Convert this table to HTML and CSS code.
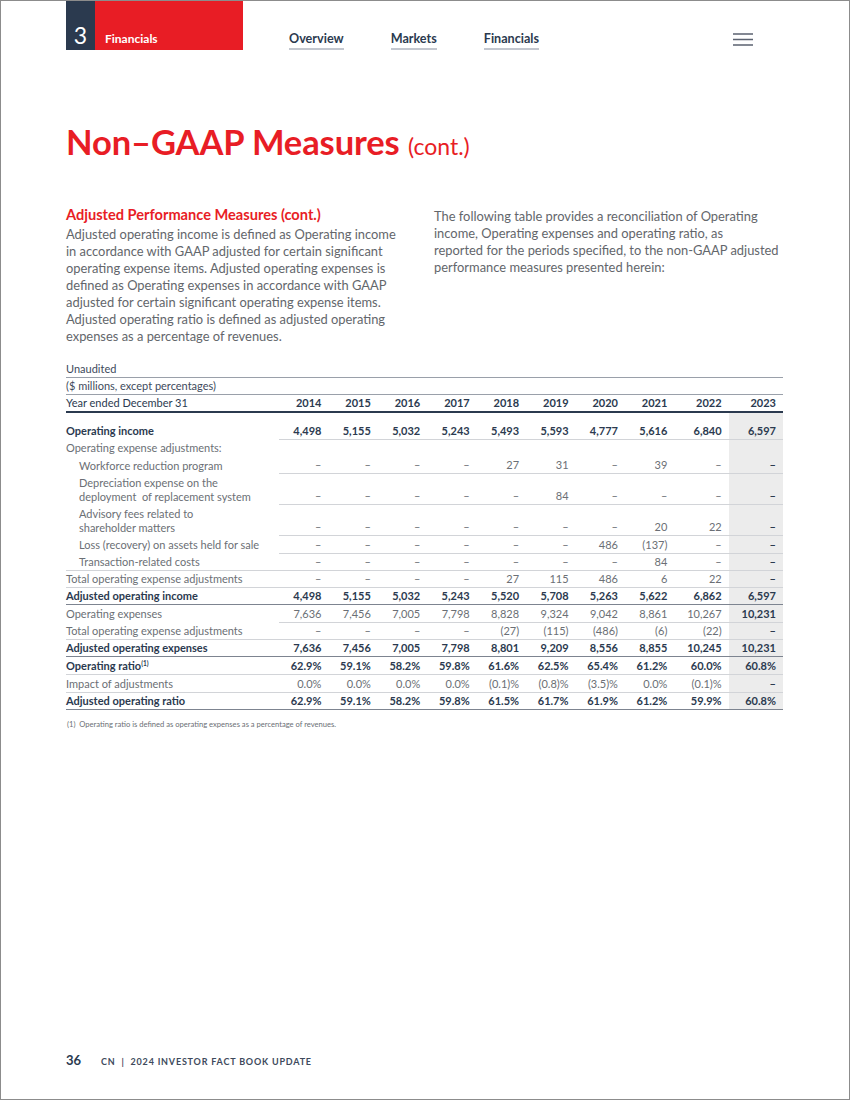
FILE: index.html
```html
<!DOCTYPE html>
<html>
<head>
<meta charset="utf-8">
<link rel="stylesheet" href="styles.css">
</head>
<body>
<div class="page">
  <header class="topbar">
    <div class="chapter">
      <div class="chapter-num">3</div>
      <div class="chapter-name">Financials</div>
    </div>
    <nav class="nav">
      <a>Overview</a>
      <a>Markets</a>
      <a>Financials</a>
    </nav>
    <div class="burger">
      <svg width="20" height="13" viewBox="0 0 20 13"><path d="M0 1h20M0 6.5h20M0 12h20" stroke="#5b6270" stroke-width="1.4"/></svg>
    </div>
  </header>

  <h1 class="title">Non–GAAP Measures <span class="cont">(cont.)</span></h1>

  <section class="intro">
    <div class="col-left">
      <h2 class="subhead">Adjusted Performance Measures (cont.)</h2>
      <p>Adjusted operating income is defined as Operating income<br>in accordance with GAAP adjusted for certain significant<br>operating expense items. Adjusted operating expenses is<br>defined as Operating expenses in accordance with GAAP<br>adjusted for certain significant operating expense items.<br>Adjusted operating ratio is defined as adjusted operating<br>expenses as a percentage of revenues.</p>
    </div>
    <div class="col-right">
      <p>The following table provides a reconciliation of Operating<br>income, Operating expenses and operating ratio, as<br>reported for the periods specified, to the non-GAAP adjusted<br>performance measures presented herein:</p>
    </div>
  </section>

  <table class="fin">
    <colgroup>
      <col class="c-label"><col><col><col><col><col><col><col><col><col><col>
    </colgroup>
    <tbody>
      <tr class="meta"><td colspan="11">Unaudited</td></tr>
      <tr class="meta"><td colspan="11">($ millions, except percentages)</td></tr>
      <tr class="head"><td>Year ended December 31</td><th>2014</th><th>2015</th><th>2016</th><th>2017</th><th>2018</th><th>2019</th><th>2020</th><th>2021</th><th>2022</th><th>2023</th></tr>
      <tr class="spacer"><td></td><td></td><td></td><td></td><td></td><td></td><td></td><td></td><td></td><td></td><td class="hl"></td></tr>
      <tr class="b num-line"><td>Operating income</td><td>4,498</td><td>5,155</td><td>5,032</td><td>5,243</td><td>5,493</td><td>5,593</td><td>4,777</td><td>5,616</td><td>6,840</td><td class="hl">6,597</td></tr>
      <tr class="nol"><td>Operating expense adjustments:</td><td></td><td></td><td></td><td></td><td></td><td></td><td></td><td></td><td></td><td class="hl"></td></tr>
      <tr class="ind num-line"><td>Workforce reduction program</td><td>–</td><td>–</td><td>–</td><td>–</td><td>27</td><td>31</td><td>–</td><td>39</td><td>–</td><td class="hl">–</td></tr>
      <tr class="ind num-line two"><td>Depreciation expense on the<br>deployment&nbsp; of replacement system</td><td>–</td><td>–</td><td>–</td><td>–</td><td>–</td><td>84</td><td>–</td><td>–</td><td>–</td><td class="hl">–</td></tr>
      <tr class="ind num-line two"><td>Advisory fees related to<br>shareholder matters</td><td>–</td><td>–</td><td>–</td><td>–</td><td>–</td><td>–</td><td>–</td><td>20</td><td>22</td><td class="hl">–</td></tr>
      <tr class="ind num-line"><td>Loss (recovery) on assets held for sale</td><td>–</td><td>–</td><td>–</td><td>–</td><td>–</td><td>–</td><td>486</td><td>(137)</td><td>–</td><td class="hl">–</td></tr>
      <tr class="ind full"><td>Transaction-related costs</td><td>–</td><td>–</td><td>–</td><td>–</td><td>–</td><td>–</td><td>–</td><td>84</td><td>–</td><td class="hl">–</td></tr>
      <tr class="full"><td>Total operating expense adjustments</td><td>–</td><td>–</td><td>–</td><td>–</td><td>27</td><td>115</td><td>486</td><td>6</td><td>22</td><td class="hl">–</td></tr>
      <tr class="b dark"><td>Adjusted operating income</td><td>4,498</td><td>5,155</td><td>5,032</td><td>5,243</td><td>5,520</td><td>5,708</td><td>5,263</td><td>5,622</td><td>6,862</td><td class="hl">6,597</td></tr>
      <tr class="num-line"><td>Operating expenses</td><td>7,636</td><td>7,456</td><td>7,005</td><td>7,798</td><td>8,828</td><td>9,324</td><td>9,042</td><td>8,861</td><td>10,267</td><td class="hl">10,231</td></tr>
      <tr class="full"><td>Total operating expense adjustments</td><td>–</td><td>–</td><td>–</td><td>–</td><td>(27)</td><td>(115)</td><td>(486)</td><td>(6)</td><td>(22)</td><td class="hl">–</td></tr>
      <tr class="b dark"><td>Adjusted operating expenses</td><td>7,636</td><td>7,456</td><td>7,005</td><td>7,798</td><td>8,801</td><td>9,209</td><td>8,556</td><td>8,855</td><td>10,245</td><td class="hl">10,231</td></tr>
      <tr class="b full"><td>Operating ratio<sup>(1)</sup></td><td>62.9%</td><td>59.1%</td><td>58.2%</td><td>59.8%</td><td>61.6%</td><td>62.5%</td><td>65.4%</td><td>61.2%</td><td>60.0%</td><td class="hl">60.8%</td></tr>
      <tr class="full"><td>Impact of adjustments</td><td>0.0%</td><td>0.0%</td><td>0.0%</td><td>0.0%</td><td>(0.1)%</td><td>(0.8)%</td><td>(3.5)%</td><td>0.0%</td><td>(0.1)%</td><td class="hl">–</td></tr>
      <tr class="b dark"><td>Adjusted operating ratio</td><td>62.9%</td><td>59.1%</td><td>58.2%</td><td>59.8%</td><td>61.5%</td><td>61.7%</td><td>61.9%</td><td>61.2%</td><td>59.9%</td><td class="hl">60.8%</td></tr>
    </tbody>
  </table>
  <p class="footnote">(1)&nbsp; Operating ratio is defined as operating expenses as a percentage of revenues.</p>

  <footer class="footer">
    <span class="pg">36</span>
    <span class="book">CN&nbsp; |&nbsp; 2024 INVESTOR FACT BOOK UPDATE</span>
  </footer>
</div>
</body>
</html>
```

FILE: styles.css
```css
* { box-sizing: border-box; }
html, body { margin: 0; padding: 0; background: #fff; }
body { font-family: Lato, "Open Sans", sans-serif; color: #2b3a4f; }

.page {
  width: 850px;
  height: 1100px;
  border: 1px solid #8c8c8c;
  display: flex;
  flex-direction: column;
  overflow: hidden;
}

/* top bar */
.topbar {
  display: flex;
  align-items: flex-start;
  height: 49px;
  padding-left: 65px;
}
.chapter { display: flex; height: 49px; }
.chapter-num {
  width: 29px;
  background: #2b3a4f;
  color: #fff;
  font-size: 23px;
  line-height: 1;
  text-align: center;
  padding-top: 23px;
}
.chapter-name {
  width: 148px;
  background: #e81d25;
  color: #fff;
  font-size: 12px;
  font-weight: 700;
  padding: 30px 0 0 10px;
}
.nav {
  display: flex;
  gap: 47px;
  margin-left: 46px;
  padding-top: 31px;
}
.nav a {
  font-size: 12.6px;
  font-weight: 700;
  color: #2b3a4f;
  padding-bottom: 2px;
  border-bottom: 2px solid #c3c7cf;
  line-height: 14px;
}
.burger {
  margin-left: auto;
  margin-right: 96px;
  padding-top: 32px;
}
.burger svg { display: block; }

/* title */
.title {
  margin: 73px 0 0 65px;
  font-size: 34.5px;
  font-weight: 700;
  color: #e81d25;
  line-height: 38px;
  letter-spacing: -0.1px;
}
.title .cont {
  font-size: 23px;
  font-weight: 400;
  letter-spacing: 0;
}

/* intro */
.intro {
  display: flex;
  margin: 41px 0 0 65px;
}
.col-left { width: 345px; }
.col-right { width: 360px; margin-left: 23px; padding-top: 2px; }
.subhead {
  margin: 0;
  font-size: 14.6px;
  font-weight: 700;
  color: #e81d25;
  line-height: 17px;
}
.intro p {
  margin: 3px 0 0;
  font-size: 12.9px;
  line-height: 17px;
  color: #63666b;
  white-space: nowrap;
}
.col-right p { margin-top: 0; }

/* table */
.fin {
  margin: 15px 0 0 65px;
  width: 717px;
  border-collapse: collapse;
  font-size: 11px;
  color: #6b6f75;
}
.fin .c-label { width: 213px; }
.fin td, .fin th {
  padding: 0 7px 1px 0;
  height: 17.3px;
  line-height: 14px;
  text-align: right;
  vertical-align: bottom;
  white-space: nowrap;
}
.fin td:first-child { text-align: left; padding: 0 0 1px 0; }
.fin tr.meta td {
  color: #3e4a5c;
  border-bottom: 1px solid #9aa0aa;
}
.fin tr.head td, .fin tr.head th {
  color: #2b3a4f;
  border-bottom: 2.5px solid #2b3a4f;
}
.fin tr.head th { font-weight: 700; }
.fin tr.spacer td { height: 10px; }
.fin tr.two td { height: 31px; }
.fin .hl { background: #ececec; color: #2b3a4f; font-weight: 700; }

.fin tr.b td { color: #2b3a4f; font-weight: 700; }
.fin tr.ind td:first-child { padding-left: 13px; }
.fin tr td { border-bottom: 1px solid #d2d4d8; }
.fin tr.num-line td:first-child { border-bottom: none; }
.fin tr.nol td { border-bottom: none; }
.fin tr.dark td, .fin tr.dark td:first-child { border-bottom: 1px solid #7d8490; }
.fin tr.spacer td { border-bottom: none; }
.fin sup { font-size: 6.5px; vertical-align: 4px; }

.footnote {
  margin: 9px 0 0 66px;
  font-size: 7.6px;
  color: #6b6f75;
}

/* footer */
.footer {
  margin-top: auto;
  margin-bottom: 31px;
  padding-left: 65px;
  display: flex;
  align-items: baseline;
}
.pg { font-size: 13px; font-weight: 700; color: #2b3a4f; width: 35px; }
.book { font-size: 9px; font-weight: 700; letter-spacing: 0.8px; color: #3e4a5c; }
```
